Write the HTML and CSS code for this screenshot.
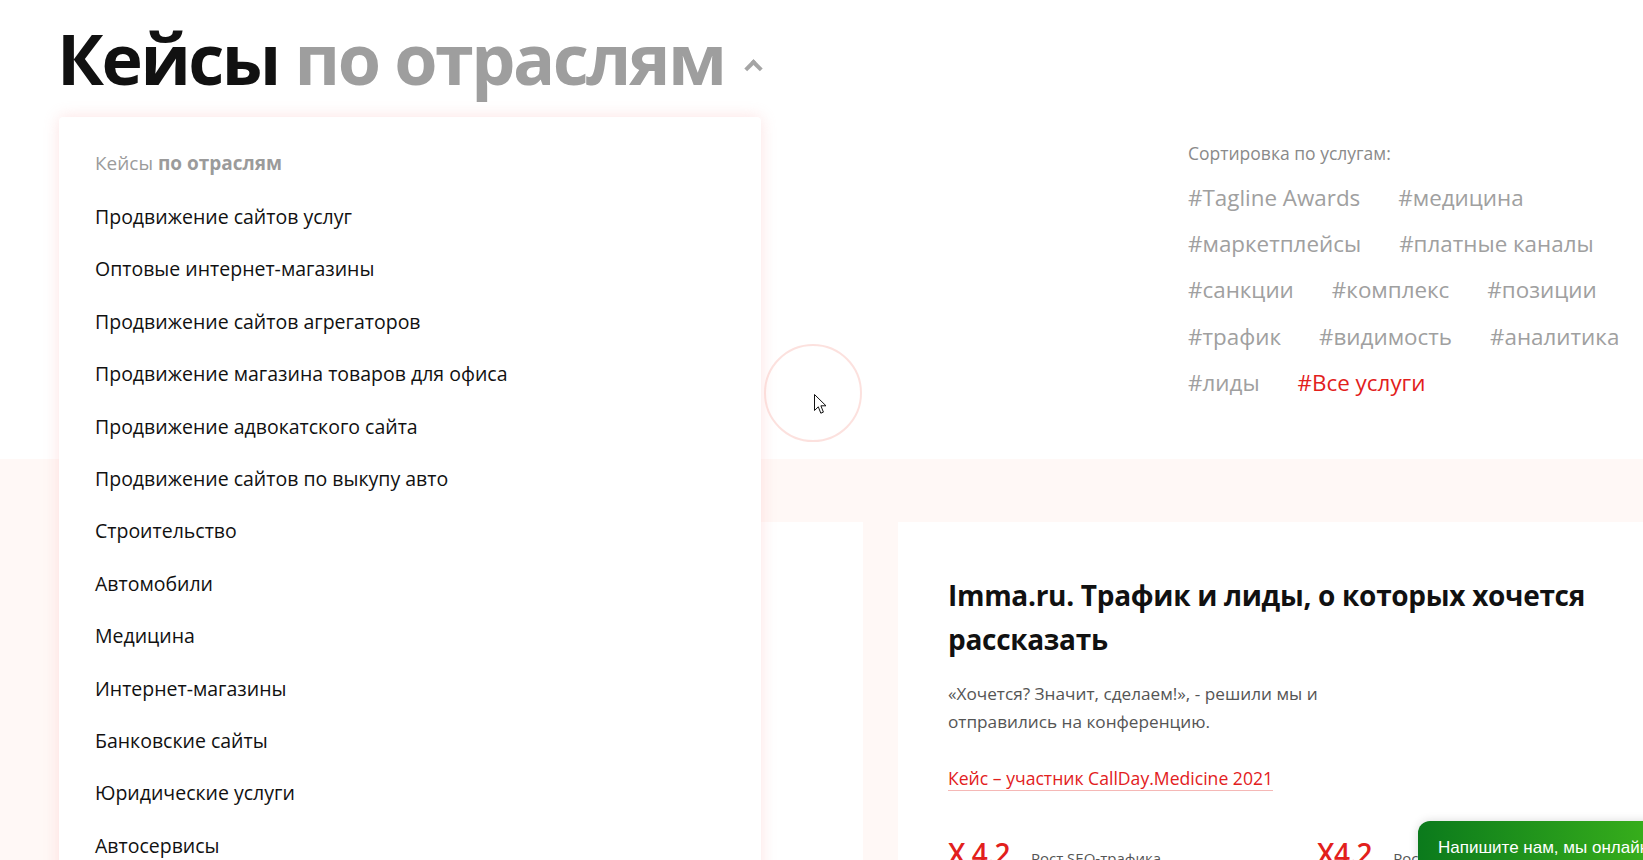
FILE: index.html
```html
<!DOCTYPE html>
<html lang="ru">
  <head>
    <meta charset="UTF-8" />
    <meta name="viewport" content="width=device-width, initial-scale=1.0" />
    <title>Кейсы по отраслям</title>
    <link rel="stylesheet" href="styles.css">
  </head>
  <body>
    <section class="intro">
      <h1 class="title">
        Кейсы <span class="title-muted">по отраслям</span><span class="caret"></span>
      </h1>

      <div class="filter">
        <div class="filter-label">Сортировка по услугам:</div>
        <div class="tags">
          <div class="tag-row">
            <a class="tag">#Tagline Awards</a>
            <a class="tag">#медицина</a>
          </div>
          <div class="tag-row">
            <a class="tag">#маркетплейсы</a>
            <a class="tag">#платные каналы</a>
          </div>
          <div class="tag-row">
            <a class="tag">#санкции</a>
            <a class="tag">#комплекс</a>
            <a class="tag">#позиции</a>
          </div>
          <div class="tag-row">
            <a class="tag">#трафик</a>
            <a class="tag">#видимость</a>
            <a class="tag">#аналитика</a>
          </div>
          <div class="tag-row">
            <a class="tag">#лиды</a>
            <a class="tag tag-active">#Все услуги</a>
          </div>
        </div>
      </div>
    </section>

    <section class="cases">
      <div class="case-card"></div>
      <div class="case-card">
        <h2 class="case-title">Imma.ru. Трафик и лиды, о которых хочется рассказать</h2>
        <p class="case-text">
          «Хочется? Значит, сделаем!», - решили мы и<br />
          отправились на конференцию.
        </p>
        <a class="case-link">Кейс – участник CallDay.Medicine 2021</a>
        <div class="stats">
          <div class="stat">
            <span class="stat-value">X 4.2</span>
            <span class="stat-label">Рост SEO-трафика</span>
          </div>
          <div class="stat">
            <span class="stat-value">X4.2</span>
            <span class="stat-label">Рост лидов</span>
          </div>
        </div>
      </div>
    </section>

    <!-- dropdown opened over the page -->
    <div class="dropdown">
      <div class="dropdown-head">Кейсы <b>по отраслям</b></div>
      <ul class="dropdown-list">
        <li>Продвижение сайтов услуг</li>
        <li>Оптовые интернет-магазины</li>
        <li>Продвижение сайтов агрегаторов</li>
        <li>Продвижение магазина товаров для офиса</li>
        <li>Продвижение адвокатского сайта</li>
        <li>Продвижение сайтов по выкупу авто</li>
        <li>Строительство</li>
        <li>Автомобили</li>
        <li>Медицина</li>
        <li>Интернет-магазины</li>
        <li>Банковские сайты</li>
        <li>Юридические услуги</li>
        <li>Автосервисы</li>
      </ul>
    </div>

    <div class="cursor-ring">
      <svg class="cursor" width="13" height="21" viewBox="0 0 13 21">
        <path d="M0.5 0.5 L0.5 16.5 L4.3 12.8 L6.8 19.2 L9.4 18.1 L6.9 11.8 L12 11.8 Z" fill="#fff" stroke="#111" stroke-width="1" stroke-linejoin="miter" />
      </svg>
    </div>

    <button class="chat-btn">Напишите нам, мы онлайн!</button>
  </body>
</html>
```

FILE: styles.css
```css
* {
  margin: 0;
  padding: 0;
  box-sizing: border-box;
}

body {
  font-family: "Open Sans", "Noto Sans", sans-serif;
  color: #111;
  background: #fff;
  width: 1643px;
  height: 860px;
  overflow: hidden;
  position: relative;
}

a {
  text-decoration: none;
  cursor: pointer;
}

.intro {
  height: 459px;
  display: flex;
  justify-content: space-between;
  padding: 22px 0 0 57px;
}

.title {
  font-size: 70px;
  line-height: 72px;
  font-weight: 700;
  letter-spacing: -2.5px;
  color: #111;
  white-space: nowrap;
  align-self: flex-start;
}

.title-muted {
  color: #9e9e9e;
}

.caret {
  display: inline-block;
  width: 13px;
  height: 13px;
  border-top: 4px solid #a5a5a5;
  border-left: 4px solid #a5a5a5;
  transform: rotate(45deg);
  margin-left: 22px;
  vertical-align: 10px;
}

.filter {
  width: 455px;
  padding-top: 120px;
}

.filter-label {
  font-size: 17.5px;
  line-height: 22px;
  color: #8a8a8a;
  margin-bottom: 10px;
}

.tag-row {
  display: flex;
  gap: 38px;
  height: 46.4px;
  align-items: center;
  white-space: nowrap;
}

.tag {
  font-size: 22.4px;
  color: #a0a0a0;
}

.tag-active {
  color: #e2201c;
}

.cases {
  background: #fff8f6;
  height: 401px;
  display: flex;
  gap: 35px;
  padding: 63px 0 0 60px;
}

.case-card {
  background: #fff;
  width: 803px;
  flex-shrink: 0;
  padding: 51px 0 0 50px;
}

.case-title {
  font-size: 28px;
  line-height: 44px;
  font-weight: 700;
  color: #111;
  width: 680px;
  letter-spacing: -0.3px;
}

.case-text {
  margin-top: 19px;
  font-size: 17.2px;
  line-height: 28.3px;
  color: #555;
}

.case-link {
  display: inline-block;
  margin-top: 29px;
  font-size: 17.6px;
  line-height: 24px;
  color: #e2201c;
  border-bottom: 1px solid #f5b8b6;
}

.stats {
  display: flex;
  gap: 95px;
  margin-top: 43px;
}

.stat {
  display: flex;
  align-items: baseline;
  gap: 21px;
  width: 274px;
}

.stat-value {
  font-size: 28px;
  font-weight: 600;
  letter-spacing: -0.5px;
  color: #e2201c;
}

.stat-label {
  font-size: 15px;
  color: #555;
}

.dropdown {
  position: absolute;
  left: 59px;
  top: 117px;
  width: 702px;
  height: 800px;
  background: #fff;
  border-radius: 4px;
  box-shadow: 0 0 16px rgba(250, 190, 190, 0.45);
  padding: 34px 0 0 36px;
}

.dropdown-head {
  font-size: 19px;
  line-height: 24px;
  color: #9b9b9b;
  margin-bottom: 16px;
}

.dropdown-head b {
  font-weight: 700;
}

.dropdown-list {
  list-style: none;
}

.dropdown-list li {
  font-size: 19.5px;
  line-height: 52.4px;
  color: #111;
}

.cursor-ring {
  position: absolute;
  left: 764px;
  top: 344px;
  width: 98px;
  height: 98px;
  border-radius: 50%;
  border: 2px solid rgba(250, 200, 195, 0.55);
}

.cursor {
  position: absolute;
  left: 48px;
  top: 48px;
}

.chat-btn {
  position: absolute;
  left: 1418px;
  top: 821px;
  width: 260px;
  height: 50px;
  border: none;
  border-radius: 12px 0 0 0;
  background: linear-gradient(90deg, #0b7a1c 0%, #3db51b 100%);
  color: #fff;
  font-family: "Liberation Sans", Arial, sans-serif;
  font-size: 17px;
  text-align: left;
  padding: 4px 0 0 20px;
  white-space: nowrap;
  box-shadow: 0 0 10px rgba(0, 0, 0, 0.15);
}
```
